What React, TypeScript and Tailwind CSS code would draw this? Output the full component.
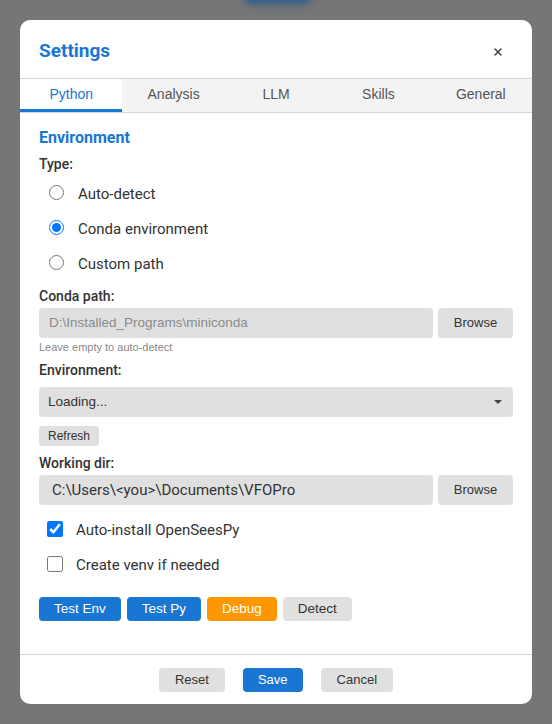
import { X } from "lucide-react";

// Settings dialog, Python tab, over a dimmed page.

const TABS = ["Python", "Analysis", "LLM", "Skills", "General"];

const sans = "font-['Liberation_Sans',Arial,sans-serif]";
const roboto = "font-['Roboto','Noto_Sans',sans-serif]";

function Label({ children }: { children: React.ReactNode }) {
  return (
    <div className={`${roboto} text-[14px] font-medium leading-[18px] text-[#333]`}>
      {children}
    </div>
  );
}

function GrayButton({ children, className = "" }: { children: React.ReactNode; className?: string }) {
  return (
    <button className={`${sans} rounded bg-[#e0e0e0] text-[#333] ${className}`}>
      {children}
    </button>
  );
}

function Radio({ label, checked }: { label: string; checked?: boolean }) {
  return (
    <label className="flex h-[35px] items-center gap-[14px] pl-[10px]">
      <input type="radio" name="envtype" defaultChecked={checked} className="h-[15px] w-[15px]" />
      <span className={`${roboto} mt-[3px] text-[15px] text-[#333]`}>{label}</span>
    </label>
  );
}

function Check({ label, checked }: { label: string; checked?: boolean }) {
  return (
    <label className="flex h-[35px] items-center gap-[13px] pl-[8px]">
      <input type="checkbox" defaultChecked={checked} className="h-4 w-4" />
      <span className={`${roboto} mt-1 text-[15px] text-[#333]`}>{label}</span>
    </label>
  );
}

export default function App() {
  return (
    <div className="relative h-[724px] w-full overflow-hidden bg-[#767676] pt-5">
      {/* blurred button behind the overlay */}
      <div className="absolute left-[243px] top-[-12px] h-[16px] w-[68px] rounded-lg bg-[#2c5a8c] blur-[4px]" />

      <div className="relative mx-auto flex h-[684px] w-[512px] flex-col overflow-hidden rounded-[10px] bg-white">
        {/* header */}
        <div className="flex h-[59px] items-center justify-between border-b border-[#d6d6d6] pl-[19px] pr-[28px] pt-[5px]">
          <h2 className={`${roboto} text-[19px] font-bold text-[#1976d2]`}>Settings</h2>
          <X size={12} strokeWidth={3} className="text-[#444]" />
        </div>

        {/* tabs */}
        <div className="flex h-[34px] border-b border-[#d6d6d6] bg-[#f3f3f3]">
          {TABS.map((t, i) => (
            <div
              key={t}
              className={`${sans} flex flex-1 items-center justify-center border-b-[3px] text-[14px] ${
                i === 0 ? "border-[#1976d2] bg-white text-[#1976d2]" : "border-transparent text-[#555]"
              }`}
            >
              {t}
            </div>
          ))}
        </div>

        {/* body */}
        <div className="flex-1 px-[19px] pt-[15px]">
          <h3 className={`${roboto} text-[16px] font-bold leading-5 text-[#1976d2]`}>Environment</h3>
          <div className="mt-[7px]">
            <Label>Type:</Label>
          </div>
          <div className="mt-[2px]">
            <Radio label="Auto-detect" />
            <Radio label="Conda environment" checked />
            <Radio label="Custom path" />
          </div>

          <div className="mt-[7px]">
            <Label>Conda path:</Label>
          </div>
          <div className="mt-[3px] flex gap-[5px]">
            <div className={`${sans} flex h-[30px] flex-1 items-center rounded bg-[#e0e0e0] px-[10px] text-[13.5px] text-[#8a8a8a]`}>
              D:\Installed_Programs\miniconda
            </div>
            <GrayButton className="h-[30px] w-[75px] text-[13px]">Browse</GrayButton>
          </div>
          <div className={`${sans} mt-[2px] text-[11px] leading-[14px] text-[#888]`}>Leave empty to auto-detect</div>

          <div className="mt-[7px]">
            <Label>Environment:</Label>
          </div>
          <div className={`${sans} mt-2 flex h-[30px] items-center justify-between rounded bg-[#e0e0e0] pl-[9px] pr-[11px] text-[13.5px] text-[#333]`}>
            <span>Loading...</span>
            <span className="h-0 w-0 border-x-[4px] border-t-[4px] border-x-transparent border-t-[#444]" />
          </div>
          <GrayButton className="mt-[9px] h-5 px-[9px] text-[12px]">Refresh</GrayButton>

          <div className="mt-[8px]">
            <Label>Working dir:</Label>
          </div>
          <div className="mt-[3px] flex gap-[5px]">
            <div className={`${roboto} flex h-[30px] flex-1 items-center rounded bg-[#e0e0e0] px-[13px] text-[15px] text-[#333]`}>
              {"C:\\Users\\<you>\\Documents\\VFOPro"}
            </div>
            <GrayButton className="h-[30px] w-[75px] text-[13px]">Browse</GrayButton>
          </div>

          <div className="mt-[6px]">
            <Check label="Auto-install OpenSeesPy" checked />
            <Check label="Create venv if needed" />
          </div>

          <div className={`${sans} mt-4 flex gap-[6px] text-[13.5px]`}>
            <button className="h-6 rounded bg-[#1976d2] px-[15px] text-white">Test Env</button>
            <button className="h-6 rounded bg-[#1976d2] px-[15px] text-white">Test Py</button>
            <button className="h-6 rounded bg-[#ff9800] px-[15px] text-white">Debug</button>
            <GrayButton className="h-6 px-[15px]">Detect</GrayButton>
          </div>
        </div>

        {/* footer */}
        <div className={`${sans} flex h-[50px] items-center justify-center gap-[18px] border-t border-[#d6d6d6] text-[13px]`}>
          <GrayButton className="h-6 px-4">Reset</GrayButton>
          <button className="h-6 rounded bg-[#1976d2] px-[15px] text-white">Save</button>
          <GrayButton className="h-6 px-4">Cancel</GrayButton>
        </div>
      </div>
    </div>
  );
}
